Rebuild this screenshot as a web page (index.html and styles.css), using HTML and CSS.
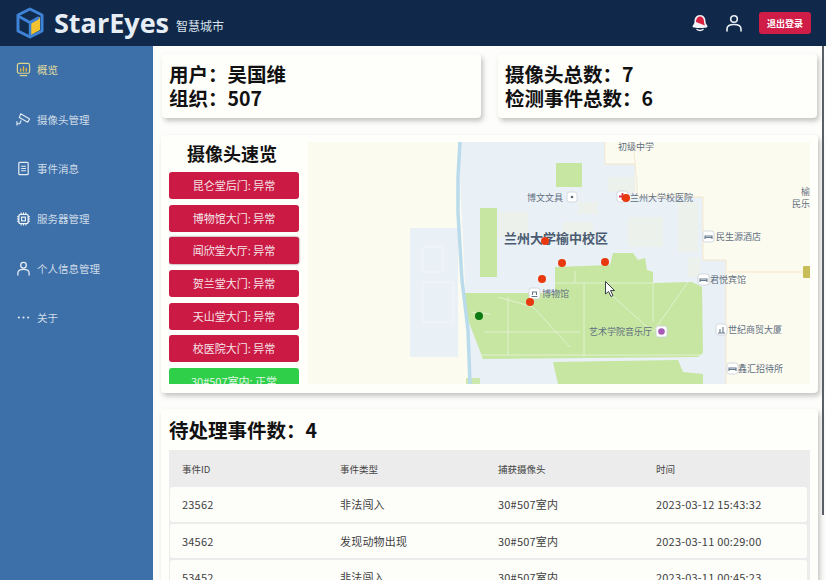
FILE: index.html
```html
<!DOCTYPE html>
<html lang="zh-CN">
<head>
    <meta charset="UTF-8">
    <meta name="viewport" content="width=device-width, initial-scale=1.0">
    <title>StarEyes 智慧城市</title>
    <link rel="stylesheet" href="styles.css">
</head>
<body>

<header class="topbar">
    <div class="brand">
        <svg class="logo" viewBox="0 0 30 32" width="30" height="32">
            <path d="M15 2 27 8v16l-12 6-12-6V8z" fill="#102b4c" stroke="#3f83d6" stroke-width="3" stroke-linejoin="round"/>
            <path d="M14 16 25 10v13l-11 6z" fill="#f3c230"/>
            <path d="M3 9 15 15.500 24 10.500" fill="none" stroke="#3f83d6" stroke-width="3"/>
            <path d="M15 15v14" stroke="#3f83d6" stroke-width="2.500"/>
        </svg>
        <span class="brand-name">StarEyes</span>
        <span class="brand-sub">智慧城市</span>
    </div>
    <div class="top-actions">
        <svg class="top-icon" viewBox="0 0 18 18" width="18" height="18">
            <path d="M9 1C5 1 3.500 4 3.500 7.500 3.500 10 1.500 11 1.500 12.500c0 1 3 1.500 7.500 1.500s7.500-.5 7.500-1.500c0-1.500-2-2.500-2-5C14.500 4 13 1 9 1z" fill="#f2f4f7"/>
            <path d="M9 2.500C6.500 2.500 5 5 5 8l9 3.500c-.5-1.500-1-2.500-1-4C13 4.500 11.500 2.500 9 2.500z" fill="#d8203f"/>
            <path d="M6 15.500c1.500 1.200 4.500 1.200 6 0" fill="none" stroke="#f2f4f7" stroke-width="1.500" stroke-linecap="round"/>
        </svg>
        <svg class="top-icon" viewBox="0 0 18 18" width="18" height="18">
            <circle cx="9" cy="5" r="3.300" fill="none" stroke="#e9eef4" stroke-width="1.600"/>
            <path d="M2 17v-2c0-3 2.500-4.500 7-4.500s7 1.500 7 4.500v2" fill="none" stroke="#e9eef4" stroke-width="1.600" stroke-linecap="round"/>
        </svg>
        <button class="logout">退出登录</button>
    </div>
</header>

<div class="body-wrap">
    <aside class="sidebar">
        <div class="nav-item active">
            <svg viewBox="0 0 16 16" width="15" height="15"><rect x="1.500" y="1.500" width="13" height="10.500" rx="2" fill="none" stroke="#dcd58e" stroke-width="1.300"/><path d="M4 14.500h8" stroke="#dcd58e" stroke-width="1.300"/><path d="M5 10V7M8 10V4.500M11 10V6.500" stroke="#e6b93a" stroke-width="1.400"/></svg>
            <span>概览</span>
        </div>
        <div class="nav-item">
            <svg viewBox="0 0 16 16" width="16" height="16"><path d="M5 2.500 14.500 8l-2 3.500L3.500 6.500z" fill="none" stroke="#e4ecf3" stroke-width="1.200" stroke-linejoin="round"/><path d="M5.500 9.500 4 13H1M1 10.500V15" fill="none" stroke="#e4ecf3" stroke-width="1.200"/></svg>
            <span>摄像头管理</span>
        </div>
        <div class="nav-item">
            <svg viewBox="0 0 16 16" width="15" height="15"><rect x="3" y="1.500" width="10" height="13" rx="1" fill="none" stroke="#e4ecf3" stroke-width="1.300"/><path d="M5.500 5.500h5M5.500 8h5M5.500 10.500h5" stroke="#e4ecf3" stroke-width="1.100"/></svg>
            <span>事件消息</span>
        </div>
        <div class="nav-item">
            <svg viewBox="0 0 16 16" width="16" height="16"><rect x="3" y="3" width="10" height="10" rx="2" fill="none" stroke="#f0f4f8" stroke-width="1.400"/><rect x="6" y="6" width="4" height="4" fill="none" stroke="#f0f4f8" stroke-width="1.200"/><path d="M5.500 1v2M8 1v2M10.500 1v2M5.500 13v2M8 13v2M10.500 13v2M1 5.500h2M1 8h2M1 10.500h2M13 5.500h2M13 8h2M13 10.500h2" stroke="#f0f4f8" stroke-width="1.100"/></svg>
            <span>服务器管理</span>
        </div>
        <div class="nav-item">
            <svg viewBox="0 0 16 16" width="15" height="15"><circle cx="8" cy="4.500" r="3" fill="none" stroke="#e4ecf3" stroke-width="1.400"/><path d="M2 15v-2c0-2.500 2-4 6-4s6 1.500 6 4v2" fill="none" stroke="#e4ecf3" stroke-width="1.400" stroke-linecap="round"/></svg>
            <span>个人信息管理</span>
        </div>
        <div class="nav-item">
            <svg viewBox="0 0 16 16" width="15" height="15"><circle cx="3" cy="8" r="1.100" fill="#e4ecf3"/><circle cx="8" cy="8" r="1.100" fill="#e4ecf3"/><circle cx="13" cy="8" r="1.100" fill="#e4ecf3"/></svg>
            <span>关于</span>
        </div>
    </aside>

    <main class="content">
        <div class="stat-row">
            <section class="card stat">
                <div>用户&#xFF1A;吴国维</div>
                <div>组织&#xFF1A;507</div>
            </section>
            <section class="card stat">
                <div>摄像头总数&#xFF1A;7</div>
                <div>检测事件总数&#xFF1A;6</div>
            </section>
        </div>

        <section class="card overview">
            <div class="cam-col">
                <h3>摄像头速览</h3>
                <div class="cam-list">
                    <div class="cam bad">昆仑堂后门: 异常</div>
                    <div class="cam bad">博物馆大门: 异常</div>
                    <div class="cam bad hover">闻欣堂大厅: 异常</div>
                    <div class="cam bad">贺兰堂大门: 异常</div>
                    <div class="cam bad">天山堂大门: 异常</div>
                    <div class="cam bad">校医院大门: 异常</div>
                    <div class="cam ok">30#507室内: 正常</div>
                </div>
            </div>
            <div class="map">
                <svg viewBox="0 0 502 242" width="502" height="242">
                    <rect width="502" height="242" fill="#fcfbf0"/>
                    <!-- 校区底色 -->
                    <path d="M102 86h48v129h-48z" fill="#e9f0f6"/>
                    <path d="M150 0H297V22H327V55H395V118H418V242H162Z" fill="#e9f0f6"/>
                    <!-- 道路 -->
                    <path d="M297 0V22H327L330 55H395V118H418V242M419 130H500M327 22 325 0" fill="none" stroke="#f6e6cc" stroke-width="1"/>
                    <!-- 绿地 -->
                    <path d="M248 21H274V45H248Z" fill="#c6e6a2"/>
                    <path d="M172 66H189V135H172Z" fill="#c6e6a2"/>
                    <path d="M247 125 302 123 305 111H325L330 118 337 116 339 128 345 130V141L384 140 394 145 395 211 390 215 175 217 157 170V151H247Z" fill="#c6e6a2"/>
                    <path d="M245 220 370 218 375 230 395 232V242H250Z" fill="#c6e6a2"/>
                    <path d="M158 236H172V242H158Z" fill="#cde8ad"/>
                    <!-- 绿地里的小路 -->
                    <path d="M172 213H394M276 141V215M247 141H345M267 129V141M176 190H272M190 155 225 165 262 205M300 150 345 190 380 140M200 155V213M345 141V180M163 170 182 172" fill="none" stroke="#e2f1cf" stroke-width="1"/>
                    <!-- 河 -->
                    <path d="M152 0 150 35 150 71 154 138 160 188 162 242" fill="none" stroke="#b9dbec" stroke-width="3.500"/>
                    <!-- 建筑 -->
                    <path d="M190 70h30v25h-30zM255 80h30v20h-30zM300 35h30v15h-30zM320 75h35v30h-35zM370 60h20v50h-20zM270 60h20v12h-20zM380 115h12v20h-12z" fill="#f0f1e6" opacity=".6"/>
                    <path d="M115 105h20v25h-20zM115 140h30v40h-30z" fill="none" stroke="#f2f6fa" stroke-width="1"/>
                    <!-- POI 图标 -->
                    <g fill="#fff" stroke="#c9d0d8" stroke-width=".8">
                        <rect x="259" y="50" width="10" height="10" rx="2.500"/>
                        <rect x="309" y="49" width="11" height="11" rx="2.500"/>
                        <rect x="395" y="89" width="11" height="11" rx="2.500"/>
                        <rect x="390" y="132" width="11" height="11" rx="2.500"/>
                        <rect x="221" y="146" width="11" height="11" rx="2.500"/>
                        <rect x="348" y="184" width="11" height="11" rx="2.500"/>
                        <rect x="408" y="182" width="11" height="11" rx="2.500"/>
                        <rect x="419" y="221" width="11" height="11" rx="2.500"/>
                    </g>
                    <circle cx="264" cy="55" r="1.300" fill="#5c6b7c"/>
                    <path d="M314.500 51v7M311 54.500h7" stroke="#d8334a" stroke-width="1.800"/>
                    <path d="M397 97v-3h7v3M397 95.500h7M392 140v-3h7v3M392 138.500h7M421 229v-3h7v3M421 227.500h7" fill="none" stroke="#66788c" stroke-width="1.100"/>
                    <path d="M223.500 154.500h6M224.500 153v-3h4v3" fill="none" stroke="#66788c" stroke-width="1.100"/>
                    <circle cx="353.500" cy="189.500" r="3.300" fill="#a65cb5"/>
                    <path d="M410 191h7M412 191v-4M415 191v-6" stroke="#66788c" stroke-width="1.100"/>
                    <rect x="495" y="124" width="8" height="12" rx="1" fill="#c9bd5a"/>
                    <!-- 地名 -->
                    <g class="map-label">
                        <text x="310" y="8">初级中学</text>
                        <text x="219" y="59">博文文具</text>
                        <text x="322" y="59">兰州大学校医院</text>
                        <text x="408" y="98">民生源酒店</text>
                        <text x="402" y="141">君悦宾馆</text>
                        <text x="234" y="155">博物馆</text>
                        <text x="281" y="193">艺术学院音乐厅</text>
                        <text x="420" y="191">世纪商贸大厦</text>
                        <text x="430" y="230">鑫汇招待所</text>
                        <text x="493" y="53">榆</text>
                        <text x="484" y="65">民乐</text>
                    </g>
                    <text class="map-title" x="196" y="101">兰州大学榆中校区</text>
                    <!-- 摄像头点位 -->
                    <g fill="#e8390e">
                        <circle cx="237" cy="99" r="4"/>
                        <circle cx="254" cy="121" r="4"/>
                        <circle cx="297" cy="120" r="4"/>
                        <circle cx="234" cy="137" r="4"/>
                        <circle cx="222" cy="160" r="4"/>
                        <circle cx="318" cy="56" r="4"/>
                    </g>
                    <circle cx="171" cy="174" r="4" fill="#0b7a12"/>
                    <!-- 鼠标 -->
                    <path d="M297.500 139.500V152L300.500 149.500 303 154.500 305 153.500 302.500 148.500H306.500Z" fill="#fff" stroke="#3a4048" stroke-width="1"/>
                </svg>
            </div>
        </section>

        <section class="card events">
            <h2>待处理事件数&#xFF1A;4</h2>
            <div class="event-table">
                <div class="event-head">
                    <span>事件ID</span><span>事件类型</span><span>捕获摄像头</span><span>时间</span>
                </div>
                <div class="event-row">
                    <span>23562</span><span>非法闯入</span><span>30#507室内</span><span>2023-03-12 15:43:32</span>
                </div>
                <div class="event-row">
                    <span>34562</span><span>发现动物出现</span><span>30#507室内</span><span>2023-03-11 00:29:00</span>
                </div>
                <div class="event-row">
                    <span>53452</span><span>非法闯入</span><span>30#507室内</span><span>2023-03-11 00:45:23</span>
                </div>
            </div>
        </section>
    </main>
</div>

<div class="scroll-thumb"></div>

</body>
</html>
```

FILE: styles.css
```css
* {
    box-sizing: border-box;
}
html, body {
    height: 100%;
}
body {
    margin: 0;
    overflow: hidden;
    font-family: "Noto Sans CJK SC", "Noto Sans", sans-serif;
    background: #fdfdfb;
    color: #111;
}
.topbar {
    height: 46px;
    background: #10294a;
    display: flex;
    justify-content: space-between;
    align-items: center;
    padding: 0 15px;
}
.brand {
    display: flex;
    align-items: center;
}
.logo {
    margin-right: 9px;
}
.brand-name {
    font-family: "Open Sans", sans-serif;
    font-size: 27px;
    font-weight: 700;
    color: #e6edf4;
    line-height: 46px;
}
.brand-sub {
    font-size: 12px;
    color: #dbe4ec;
    margin: 5px 0 0 7px;
}
.top-actions {
    display: flex;
    align-items: center;
}
.top-icon {
    margin-right: 16px;
}
.logout {
    width: 52px;
    height: 22px;
    padding: 0;
    border: none;
    border-radius: 3px;
    background: #cf1d47;
    color: #fff;
    font-family: inherit;
    font-size: 9px;
    font-weight: 700;
}
.body-wrap {
    display: flex;
    height: 534px;
}
.sidebar {
    width: 153px;
    flex-shrink: 0;
    background: #3d70a8;
}
.nav-item {
    height: 49.600px;
    display: flex;
    align-items: center;
    padding-left: 16px;
    color: #cfdce9;
    font-size: 10.500px;
}
.nav-item:first-child {
    margin-top: -1px;
}
.nav-item svg {
    width: 15px;
    margin-right: 6px;
}
.nav-item.active {
    color: #e0dc9e;
}
.content {
    flex: 1;
    padding: 8px 8px 0 8px;
    overflow: hidden;
}
.card {
    background: #fefefb;
    border-radius: 4px;
    box-shadow: 2px 3px 5px rgba(90, 90, 90, 0.35);
}
.stat-row {
    display: flex;
    gap: 17px;
    padding: 0 1px;
    margin-bottom: 17px;
}
.stat {
    flex: 1;
    height: 64px;
    padding: 8px 7px;
    font-size: 19.500px;
    font-weight: 700;
    line-height: 24px;
}
.overview {
    display: flex;
    height: 258px;
    margin-bottom: 16px;
    padding: 7px 8px 9px 8px;
    overflow: hidden;
}
.cam-col {
    width: 139px;
    flex-shrink: 0;
    overflow: hidden;
}
.cam-col h3 {
    margin: 0;
    width: 126px;
    height: 30px;
    text-align: center;
    font-size: 18px;
    line-height: 23px;
    font-weight: 700;
}
.cam-list {
    display: flex;
    flex-direction: column;
    gap: 5.700px;
    width: 130px;
}
.cam {
    height: 27px;
    flex-shrink: 0;
    border-radius: 3px;
    color: #f5e6ea;
    font-size: 11px;
    line-height: 27px;
    text-align: center;
}
.cam.bad {
    background: #cb1a44;
}
.cam.bad.hover {
    box-shadow: 0 0 2px #6b3b55;
}
.cam.ok {
    background: #2fcf4a;
    color: #e4f7e6;
}
.map {
    width: 502px;
    height: 242px;
    overflow: hidden;
}
.map svg {
    display: block;
}
.map-label text {
    font-size: 9px;
    fill: #5f6e80;
}
.map-title {
    font-size: 13px;
    font-weight: 700;
    fill: #4a5b72;
}
.events {
    height: 200px;
    padding: 8px 8px 0 8px;
}
.events h2 {
    margin: 0 0 8px 0;
    font-size: 19.500px;
    line-height: 25px;
    font-weight: 700;
}
.event-table {
    background: #ececec;
    padding-bottom: 2px;
}
.event-head, .event-row {
    display: grid;
    grid-template-columns: 158px 158px 158px 1fr;
    align-items: center;
}
.event-head {
    height: 37px;
    padding-left: 13px;
    font-size: 9.500px;
    color: #444;
}
.event-row {
    height: 34.500px;
    margin: 0 3px 2px 1px;
    padding-left: 12px;
    background: #fdfdfa;
    border-radius: 3px;
    font-size: 11px;
    letter-spacing: 0.2px;
    color: #3f3f3f;
}
.scroll-thumb {
    position: absolute;
    top: 46px;
    right: 2px;
    width: 2px;
    height: 469px;
    background: #5a5f66;
}
```
